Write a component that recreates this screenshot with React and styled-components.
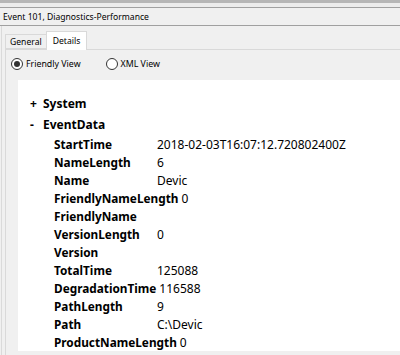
import styled, { createGlobalStyle } from "styled-components";

const GlobalStyle = createGlobalStyle`
  html, body {
    margin: 0;
    padding: 0;
    background: #f0f0f0;
  }
`;

const rows = [
  ["StartTime", "2018-02-03T16:07:12.720802400Z"],
  ["NameLength", "6"],
  ["Name", "Devic"],
  ["FriendlyNameLength", "0"],
  ["FriendlyName", ""],
  ["VersionLength", "0"],
  ["Version", ""],
  ["TotalTime", "125088"],
  ["DegradationTime", "116588"],
  ["PathLength", "9"],
  ["Path", "C:\\Devic"],
  ["ProductNameLength", "0"],
];

const App = () => {
  return (
    <>
      <GlobalStyle />
      <Frame>
        <TopEdge />
        <TitleBar>Event 101, Diagnostics-Performance</TitleBar>
        <Body>
          <TabStrip>
            <Tab>General</Tab>
            <Tab active>Details</Tab>
          </TabStrip>
          <Panel>
            <RadioRow>
              <RadioOption>
                <RadioCircle checked />
                Friendly View
              </RadioOption>
              <RadioOption>
                <RadioCircle />
                XML View
              </RadioOption>
            </RadioRow>
            <Document>
              <NodeRow>
                <Toggle>+</Toggle>
                <NodeName>System</NodeName>
              </NodeRow>
              <NodeRow>
                <Toggle>-</Toggle>
                <NodeName>EventData</NodeName>
              </NodeRow>
              {rows.map(([name, value]) => (
                <DataRow key={name}>
                  <DataName>{name}</DataName>
                  <DataValue>{value}</DataValue>
                </DataRow>
              ))}
            </Document>
          </Panel>
        </Body>
      </Frame>
    </>
  );
};

export default App;

const Frame = styled.div`
  width: 400px;
  height: 355px;
  overflow: hidden;
  background: #f0f0f0;
  font-family: "Noto Sans", "Open Sans", sans-serif;
  color: #000;
`;

const TopEdge = styled.div`
  height: 4px;
  border-top: 3px solid #b6b6b6;
  border-bottom: 1px solid #a0a0a0;
  background: #ececec;
`;

const TitleBar = styled.div`
  height: 17px;
  display: flex;
  align-items: center;
  padding-left: 3px;
  font-size: 8.6px;
  border-bottom: 1px solid #a0a0a0;
  background: #f0f0f0;
`;

const Body = styled.div`
  margin-left: 1px;
  padding-left: 3px;
  border-left: 1px solid #dadada;
  height: 330px;
`;

const TabStrip = styled.div`
  height: 23px;
  display: flex;
  align-items: flex-end;
`;

const Tab = styled.div`
  position: relative;
  box-sizing: border-box;
  height: ${(p) => (p.active ? "19px" : "15px")};
  margin-bottom: ${(p) => (p.active ? "-1px" : "0")};
  padding: 0 ${(p) => (p.active ? "6px" : "4px")};
  display: flex;
  align-items: center;
  font-size: 8.6px;
  border: 1px solid #d9d9d9;
  border-bottom: ${(p) => (p.active ? "none" : "1px solid #d9d9d9")};
  background: ${(p) => (p.active ? "#ffffff" : "#f0f0f0")};
  & + & {
    margin-left: -1px;
  }
`;

const Panel = styled.div`
  border-top: 1px solid #d9d9d9;
  border-left: 1px solid #d9d9d9;
  height: 307px;
  background: #f0f0f0;
`;

const RadioRow = styled.div`
  height: 28px;
  display: flex;
  align-items: center;
  padding-left: 5px;
  gap: 25px;
  margin-bottom: 2px;
`;

const RadioOption = styled.label`
  display: flex;
  align-items: center;
  gap: 3px;
  font-size: 8.8px;
`;

const RadioCircle = styled.span`
  box-sizing: border-box;
  width: 12px;
  height: 12px;
  border-radius: 50%;
  border: 1px solid #333333;
  background: #ffffff;
  display: flex;
  align-items: center;
  justify-content: center;
  &::after {
    content: "";
    width: 6px;
    height: 6px;
    border-radius: 50%;
    background: ${(p) => (p.checked ? "#333333" : "transparent")};
  }
`;

const Document = styled.div`
  margin-left: 12px;
  height: 271px;
  background: #ffffff;
  padding-top: 13px;
  padding-left: 12px;
  box-sizing: border-box;
  font-size: 12px;
`;

const NodeRow = styled.div`
  height: 21px;
  display: flex;
  align-items: center;
  font-weight: 700;
`;

const Toggle = styled.span`
  width: 13px;
`;

const NodeName = styled.span``;

const DataRow = styled.div`
  height: 18px;
  display: flex;
  align-items: center;
  padding-left: 24px;
  white-space: nowrap;
`;

const DataName = styled.span`
  min-width: 100px;
  margin-right: 3px;
  font-weight: 700;
  font-size: 11.8px;
`;

const DataValue = styled.span``;
